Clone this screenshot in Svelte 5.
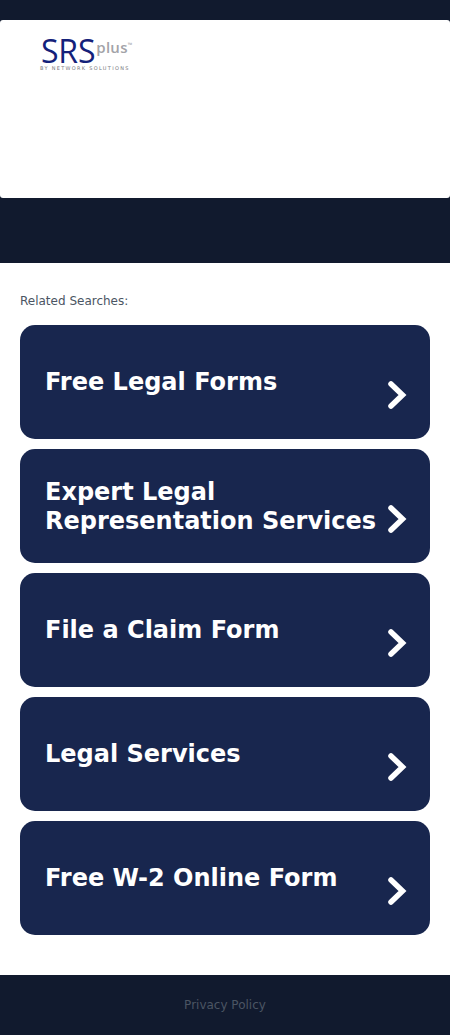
<script>
  const links = [
    "Free Legal Forms",
    "Expert Legal Representation Services",
    "File a Claim Form",
    "Legal Services",
    "Free W-2 Online Form"
  ];
</script>

<div class="page">
  <header class="top">
    <div class="panel">
      <div class="logo">
        <div class="logo-main">
          <span class="srs">SRS</span><span class="plus">plus</span><span class="tm">™</span>
        </div>
        <div class="by">BY NETWORK SOLUTIONS</div>
      </div>
    </div>
  </header>

  <main class="content">
    <p class="label">Related Searches:</p>
    <div class="list">
      {#each links as link}
        <a class="card" href="#top">
          <span class="title">{link}</span>
          <svg class="arrow" viewBox="0 0 20 30" width="20" height="30" aria-hidden="true">
            <path d="M4 4 L15.5 15 L4 26" fill="none" stroke="#fff" stroke-width="5.5" stroke-linecap="round" stroke-linejoin="miter" />
          </svg>
        </a>
      {/each}
    </div>
  </main>

  <footer class="foot">
    <a href="#top">Privacy Policy</a>
  </footer>
</div>

<style>
  :global(body) {
    margin: 0;
    background: #fff;
  }
  .page {
    font-family: "DejaVu Sans", Verdana, sans-serif;
    height: 1035px;
    display: flex;
    flex-direction: column;
  }
  .top {
    background: #111a2e;
    padding: 20px 0 65px;
  }
  .panel {
    background: #fff;
    height: 178px;
    border-radius: 3px;
    box-sizing: border-box;
    padding: 18px 0 0 40px;
  }
  .logo-main {
    display: flex;
    align-items: flex-start;
    height: 26px;
    font-family: "Open Sans", sans-serif;
  }
  .srs {
    font-size: 32px;
    line-height: 26px;
    color: #14217a;
    letter-spacing: -0.2px;
    margin-left: 1px;
  }
  .plus {
    font-size: 15px;
    line-height: 13px;
    font-weight: 600;
    letter-spacing: 0.3px;
    color: #a3a3a8;
    margin: 3px 0 0 1px;
  }
  .tm {
    font-size: 6px;
    line-height: 8px;
    color: #a3a3a8;
    margin-top: 3px;
  }
  .by {
    font-size: 5px;
    line-height: 6px;
    color: #77777c;
    letter-spacing: 1.3px;
    margin-top: 1px;
    white-space: nowrap;
  }
  .content {
    flex: 1;
    padding: 30px 20px 0;
  }
  .label {
    margin: 0 0 17px;
    font-size: 12px;
    line-height: 15px;
    color: #4b5563;
    position: relative;
    top: 1px;
  }
  .list {
    display: flex;
    flex-direction: column;
    gap: 10px;
  }
  .card {
    position: relative;
    display: flex;
    align-items: center;
    height: 114px;
    box-sizing: border-box;
    padding: 1.2px 45px 0 25px;
    background: #18264e;
    border-radius: 15px;
    text-decoration: none;
  }
  .title {
    color: #fff;
    font-size: 24px;
    line-height: 29px;
    font-weight: bold;
  }
  .arrow {
    position: absolute;
    right: 23px;
    top: 55px;
  }
  .foot {
    height: 60px;
    background: #111a2e;
    display: flex;
    align-items: center;
    justify-content: center;
  }
  .foot a {
    font-size: 12px;
    color: #4b5563;
    text-decoration: none;
  }
</style>
